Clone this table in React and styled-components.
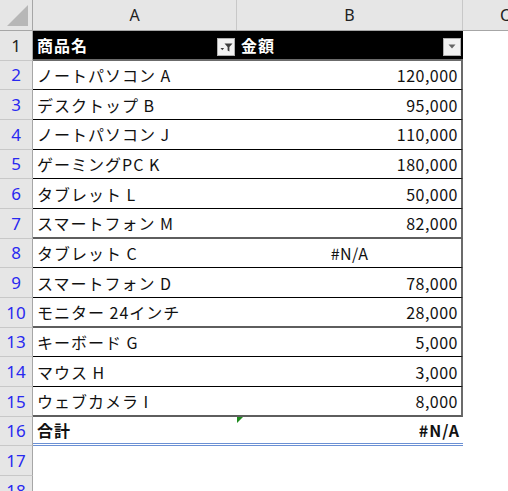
import React from 'react';
import styled, { createGlobalStyle, css } from 'styled-components';

const GlobalStyle = createGlobalStyle`
  html, body {
    margin: 0;
    padding: 0;
    background: #fff;
  }
  body {
    font-family: "Noto Sans CJK JP", "Noto Sans", sans-serif;
    overflow: hidden;
  }
`;

const COLS = '33px 204px 226px 1fr';
const ROW_H = '29.67px';

const rows = [
  { n: 2, name: 'ノートパソコン A', amount: '120,000' },
  { n: 3, name: 'デスクトップ B', amount: '95,000' },
  { n: 4, name: 'ノートパソコン J', amount: '110,000' },
  { n: 5, name: 'ゲーミングPC K', amount: '180,000' },
  { n: 6, name: 'タブレット L', amount: '50,000' },
  { n: 7, name: 'スマートフォン M', amount: '82,000', heavy: true },
  { n: 8, name: 'タブレット C', amount: '#N/A', error: true },
  { n: 9, name: 'スマートフォン D', amount: '78,000' },
  { n: 10, name: 'モニター 24インチ', amount: '28,000', heavy: true },
  { n: 13, name: 'キーボード G', amount: '5,000' },
  { n: 14, name: 'マウス H', amount: '3,000' },
  { n: 15, name: 'ウェブカメラ I', amount: '8,000', heavy: true },
];

const FilterIcon = () => (
  <svg width="13" height="12" viewBox="0 0 13 12">
    <path d="M4.5 2.5h8L9.4 6V10.5L7.6 9.4V6Z" fill="#3c3c3c" />
    <path d="M0.5 7h3.6L2.3 9.3Z" fill="#3c3c3c" />
  </svg>
);

const ArrowIcon = () => (
  <svg width="8" height="5" viewBox="0 0 8 5">
    <path d="M0.5 0.5h7L4 4.5Z" fill="#666" />
  </svg>
);

const App = () => (
  <>
    <GlobalStyle />
    <Sheet>
      <HeadRow>
        <Corner>
          <svg width="21" height="21" viewBox="0 0 21 21">
            <path d="M21 0V21H0Z" fill="#b7b7b7" />
          </svg>
        </Corner>
        <ColHead>A</ColHead>
        <ColHead>B</ColHead>
        <ColHead $open>C</ColHead>
      </HeadRow>

      <Row>
        <RowHead $plain>1</RowHead>
        <TitleCell>
          商品名
          <FilterButton>
            <FilterIcon />
          </FilterButton>
        </TitleCell>
        <TitleCell>
          金額
          <FilterButton>
            <ArrowIcon />
          </FilterButton>
        </TitleCell>
        <Blank />
      </Row>

      {rows.map(({ n, name, amount, heavy, error }) => (
        <Row key={n}>
          <RowHead>{n}</RowHead>
          <Cell $heavy={heavy}>{name}</Cell>
          <Cell $heavy={heavy} $align={error ? 'center' : 'right'} $last $numeric>
            {amount}
          </Cell>
          <Blank />
        </Row>
      ))}

      <Row>
        <RowHead>16</RowHead>
        <TotalCell>合計</TotalCell>
        <TotalCell $align="right">
          <ErrorMark />
          #N/A
        </TotalCell>
        <Blank />
      </Row>

      <Row>
        <RowHead>17</RowHead>
        <Blank />
        <Blank />
        <Blank />
      </Row>
      <Row>
        <RowHead>18</RowHead>
        <Blank />
        <Blank />
        <Blank />
      </Row>
    </Sheet>
  </>
);

const Sheet = styled.div`
  width: 508px;
  height: 491px;
  overflow: hidden;
  display: flex;
  flex-direction: column;
`;

const HeadRow = styled.div`
  display: grid;
  grid-template-columns: ${COLS};
  height: 31px;
  flex: none;
  box-sizing: border-box;
  border-bottom: 1px solid #a6a6a6;
  background: #e6e6e6;
`;

const Corner = styled.div`
  display: flex;
  align-items: flex-end;
  justify-content: flex-end;
  padding: 0 4px 4px 0;
  border-right: 1px solid #a6a6a6;
`;

const ColHead = styled.div`
  display: flex;
  align-items: center;
  justify-content: center;
  font-family: "Noto Sans", sans-serif;
  font-size: 16px;
  color: #222;
  border-right: ${({ $open }) => ($open ? 'none' : '1px solid #c8c8c8')};
  ${({ $open }) =>
    $open &&
    css`
      justify-content: flex-start;
      padding-left: 37px;
    `}
`;

const Row = styled.div`
  display: grid;
  grid-template-columns: ${COLS};
  height: ${ROW_H};
  flex: none;
`;

const RowHead = styled.div`
  display: flex;
  align-items: center;
  justify-content: center;
  box-sizing: border-box;
  background: #e6e6e6;
  border-right: 1px solid #a6a6a6;
  border-bottom: 1px solid #c8c8c8;
  font-family: "Noto Sans", sans-serif;
  font-size: 17px;
  color: ${({ $plain }) => ($plain ? '#222' : '#2929f0')};
`;

const cellText = css`
  display: flex;
  align-items: center;
  box-sizing: border-box;
  padding: 0 3px 0 4px;
  font-size: 16px;
  white-space: nowrap;
`;

const TitleCell = styled.div`
  ${cellText};
  position: relative;
  background: #000;
  color: #fff;
  font-weight: 700;
  letter-spacing: 1px;
  border-bottom: 2px solid #6b6b6b;
`;

const FilterButton = styled.span`
  position: absolute;
  right: 2px;
  bottom: 3px;
  width: 18px;
  height: 18px;
  box-sizing: border-box;
  display: flex;
  align-items: center;
  justify-content: center;
  background: #f2f2f2;
  border: 1px solid #b0b0b0;
`;

const Cell = styled.div`
  ${cellText};
  color: #111;
  letter-spacing: ${({ $numeric }) => ($numeric ? '0.5px' : '1px')};
  justify-content: ${({ $align }) =>
    $align === 'right' ? 'flex-end' : $align === 'center' ? 'center' : 'flex-start'};
  border-bottom: ${({ $heavy }) => ($heavy ? '2px solid #5e5e5e' : '1px solid #000')};
  border-right: ${({ $last }) => ($last ? '2px solid #6b6b6b' : 'none')};
`;

const TotalCell = styled.div`
  ${cellText};
  position: relative;
  color: #111;
  font-weight: 700;
  letter-spacing: 1px;
  justify-content: ${({ $align }) => ($align === 'right' ? 'flex-end' : 'flex-start')};
  border-bottom: 3px double #6b90d4;
`;

const ErrorMark = styled.span`
  position: absolute;
  top: 0;
  left: 0;
  width: 0;
  height: 0;
  border-top: 6px solid #1e8a1e;
  border-right: 6px solid transparent;
`;

const Blank = styled.div``;

export default App;
